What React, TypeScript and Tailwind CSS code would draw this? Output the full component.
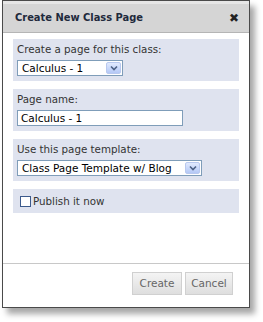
import React from "react";

function Chevron() {
  return (
    <span className="flex h-full w-[15px] items-center justify-center rounded-[2px] border border-[#b9c9ef] bg-gradient-to-b from-[#e1eafe] to-[#b4c8f6]">
      <svg width="8" height="6" viewBox="0 0 8 6">
        <path d="M1 1.5 L4 4.5 L7 1.5" stroke="#4d6185" strokeWidth="1.6" fill="none" />
      </svg>
    </span>
  );
}

function FakeSelect({ value, width }: { value: string; width: string }) {
  return (
    <div className={`flex h-[16px] items-center border border-[#7f9db9] bg-white p-[1px] ${width}`}>
      <span className="flex-1 pl-[3px] text-[10.5px] leading-none text-black">{value}</span>
      <Chevron />
    </div>
  );
}

function Section({ label, children }: { label: string; children: React.ReactNode }) {
  return (
    <div className="flex h-[42px] flex-col gap-[4px] bg-[#dfe3ef] px-[4px] pt-[4px]">
      <span className="text-[10.3px] leading-[13px] text-[#333]">{label}</span>
      {children}
    </div>
  );
}

export default function App() {
  return (
    <div className="h-[322px] w-[263px] bg-white pl-[2px]" style={{ fontFamily: '"DejaVu Sans", Verdana, sans-serif' }}>
      <div className="flex h-[308px] w-[248px] flex-col border border-[#4a4a4a] bg-white shadow-[5px_6px_6px_rgba(0,0,0,0.35)]">
        <div className="flex h-[32px] items-center justify-between border-b border-[#b5b5b5] border-t-[3px] border-t-[#e6e6e6] bg-[#d5d5d5] pl-[12px] pr-[10px]">
          <span className="font-['DejaVu_Sans_Condensed',sans-serif] text-[11px] font-bold text-[#1f2a3c]">Create New Class Page</span>
          <span className="text-[12px] font-bold leading-none text-[#222]">✖</span>
        </div>
        <div className="flex flex-1 flex-col gap-[8px] px-[10px] pt-[6px]">
          <Section label="Create a page for this class:">
            <FakeSelect value="Calculus - 1" width="w-[106px]" />
          </Section>
          <Section label="Page name:">
            <div className="flex h-[16px] w-[166px] items-center border border-[#7f9db9] bg-white pl-[3px] text-[10.5px] leading-none text-black">
              Calculus - 1
            </div>
          </Section>
          <Section label="Use this page template:">
            <FakeSelect value="Class Page Template w/ Blog" width="w-[185px]" />
          </Section>
          <div className="flex h-[24px] items-center gap-[2px] bg-[#dfe3ef] pl-[7px]">
            <span className="h-[11px] w-[11px] border border-[#3c5a8c] bg-white" />
            <span className="text-[10.3px] leading-none text-[#333]">Publish it now</span>
          </div>
        </div>
        <div className="flex h-[44px] items-start justify-end gap-[3px] border-t border-[#c8c8c8] pr-[16px] pt-[8px]">
          <button className="h-[23px] w-[50px] border border-[#d0d0d0] bg-gradient-to-b from-[#f4f4f4] to-[#dedede] text-[10.5px] text-[#666]">
            Create
          </button>
          <button className="h-[23px] w-[48px] border border-[#d0d0d0] bg-gradient-to-b from-[#f4f4f4] to-[#dedede] text-[10.5px] text-[#666]">
            Cancel
          </button>
        </div>
      </div>
    </div>
  );
}
